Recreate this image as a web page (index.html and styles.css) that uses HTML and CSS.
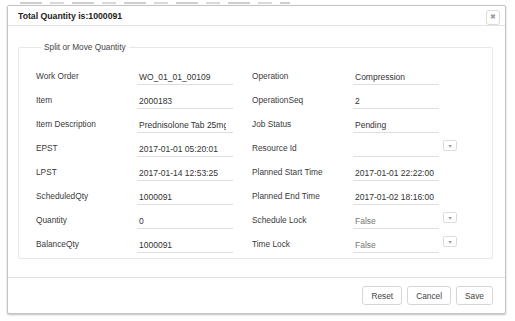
FILE: index.html
```html
<!DOCTYPE html>
<html lang="en">
<head>
  <meta charset="UTF-8">
  <title>Split or Move Quantity</title>
  <link rel="stylesheet" href="styles.css">
</head>
<body>
  <!-- Page behind the dialog -->
  <div class="backdrop"></div>

  <!-- Dialog -->
  <div class="modal">
    <div class="modal-header">
      <span class="modal-title">Total Quantity is:1000091</span>
      <button class="close-btn">&#x2716;</button>
    </div>

    <div class="modal-body">
      <fieldset class="group">
        <legend>Split or Move Quantity</legend>
        <div class="form-grid">
          <label>Work Order</label>
          <div class="value">WO_01_01_00109</div>
          <span></span>
          <label>Operation</label>
          <div class="value">Compression</div>
          <span></span>

          <label>Item</label>
          <div class="value">2000183</div>
          <span></span>
          <label>OperationSeq</label>
          <div class="value">2</div>
          <span></span>

          <label>Item Description</label>
          <div class="value"><span class="clip">Prednisolone Tab 25mg</span></div>
          <span></span>
          <label>Job Status</label>
          <div class="value">Pending</div>
          <span></span>

          <label>EPST</label>
          <div class="value">2017-01-01 05:20:01</div>
          <span></span>
          <label>Resource Id</label>
          <div class="value"></div>
          <button class="drop-btn">&#9662;</button>

          <label>LPST</label>
          <div class="value">2017-01-14 12:53:25</div>
          <span></span>
          <label>Planned Start Time</label>
          <div class="value">2017-01-01 22:22:00</div>
          <span></span>

          <label>ScheduledQty</label>
          <div class="value">1000091</div>
          <span></span>
          <label>Planned End Time</label>
          <div class="value">2017-01-02 18:16:00</div>
          <span></span>

          <label>Quantity</label>
          <div class="value">0</div>
          <span></span>
          <label>Schedule Lock</label>
          <div class="value select">False</div>
          <button class="drop-btn">&#9662;</button>

          <label>BalanceQty</label>
          <div class="value">1000091</div>
          <span></span>
          <label>Time Lock</label>
          <div class="value select">False</div>
          <button class="drop-btn">&#9662;</button>
        </div>
      </fieldset>
    </div>

    <div class="modal-footer">
      <button class="btn">Reset</button>
      <button class="btn">Cancel</button>
      <button class="btn">Save</button>
    </div>
  </div>
</body>
</html>
```

FILE: styles.css
```css
body {
  margin: 0;
  height: 321px;
  overflow: hidden;
  background: #fff;
  font-family: 'Liberation Sans', Arial, sans-serif;
  font-size: 8.3px;
  color: #333;
  position: relative;
}
.backdrop {
  height: 2px;
  margin: 2px 0 0 20px;
  width: 270px;
  background: repeating-linear-gradient(90deg, #cfcfcf 0 22px, #fff 22px 30px, #d8d8d8 30px 44px, #fff 44px 52px);
}
.modal {
  position: absolute;
  top: 5px;
  left: 7px;
  width: 497px;
  height: 307px;
  background: #fff;
  border: 1px solid #c4c4c4;
  border-radius: 2px;
  box-shadow: 0 1px 2px rgba(0, 0, 0, 0.25);
  display: flex;
  flex-direction: column;
}
.modal-header {
  height: 19px;
  display: flex;
  align-items: center;
  justify-content: space-between;
  padding: 0 5px 0 10px;
  border-bottom: 1px solid #e2e2e2;
}
.modal-title {
  font-weight: bold;
  font-size: 8.7px;
  color: #222;
  margin-top: 1px;
}
.close-btn {
  width: 14px;
  height: 15px;
  padding: 0;
  margin-top: 3px;
  border: 1px solid #dcdcdc;
  border-radius: 3px;
  background: #fff;
  color: #999;
  font-size: 7px;
  line-height: 12px;
  font-family: 'DejaVu Sans', sans-serif;
}
.modal-body {
  flex: 1;
  padding: 16px 12px 0 10px;
}
.group {
  margin: 0;
  padding: 12px 0 2px 17px;
  border: 1px solid #e6e9e4;
  border-radius: 2px;
}
.group legend {
  margin-left: 5px;
  padding: 0 3px 0 3px;
  font-size: 8.3px;
  color: #444;
}
.form-grid {
  display: grid;
  grid-template-columns: 101px 96px 19px 101px 86px 18px;
  grid-auto-rows: 24px;
  align-items: center;
}
.form-grid label {
  color: #3a3a3a;
}
.value {
  height: 15px;
  line-height: 16px;
  padding: 0 4px 0 2px;
  border-bottom: 1px solid #e3dbe3;
  white-space: nowrap;
  overflow: hidden;
  color: #333;
  font-size: 8.5px;
  margin-top: 2px;
}
.value .clip {
  display: block;
  width: 87px;
  overflow: hidden;
}
.value.select {
  color: #777;
}
.drop-btn {
  justify-self: end;
  width: 14px;
  height: 11px;
  padding: 0;
  margin-top: -5px;
  border: 1px solid #dcdcdc;
  border-radius: 2px;
  background: #fff;
  color: #999;
  font-size: 6px;
  line-height: 8px;
  font-family: 'DejaVu Sans', sans-serif;
}
.modal-footer {
  height: 35px;
  display: flex;
  justify-content: flex-end;
  align-items: center;
  gap: 5px;
  padding: 0 12px 0 0;
  border-top: 1px solid #e2e2e2;
}
.btn {
  height: 19px;
  min-width: 37px;
  padding: 0 8px;
  border: 1px solid #d6d6d6;
  border-radius: 3px;
  background: #fff;
  color: #444;
  font-family: 'Liberation Sans', Arial, sans-serif;
  font-size: 8.3px;
}
```
